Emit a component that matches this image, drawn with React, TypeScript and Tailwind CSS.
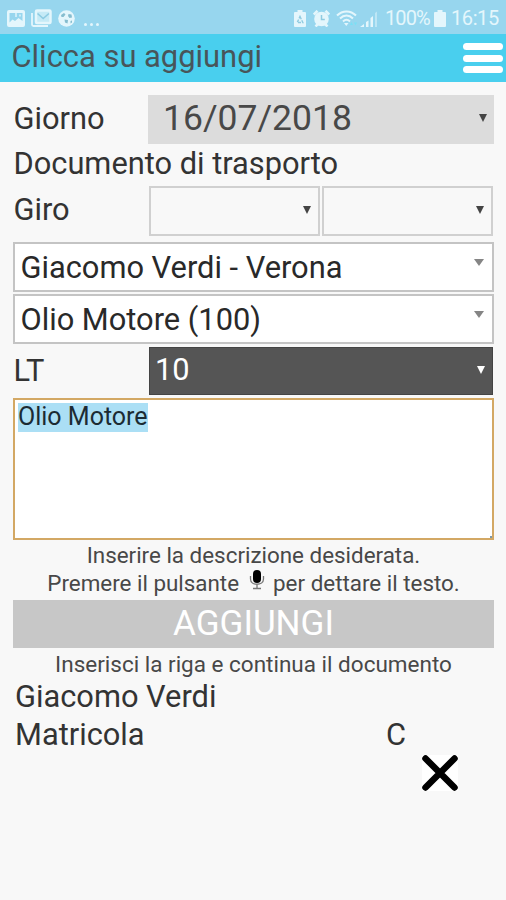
import React from "react";

function Caret({ className = "" }: { className?: string }) {
  return (
    <svg viewBox="0 0 8 8" className={`h-2 w-2 shrink-0 ${className}`} fill="currentColor">
      <path d="M0 0h8L4 8z" />
    </svg>
  );
}

function WideCaret() {
  return (
    <svg viewBox="0 0 10 7" className="mt-[15px] mr-[8px] h-[7px] w-[10px] shrink-0 text-[#858585]" fill="currentColor">
      <path d="M0 0h10L5 7z" />
    </svg>
  );
}

function StatusBar() {
  return (
    <div className="flex h-[34px] items-center justify-between bg-[#97d6ee] pl-[7px] pr-2 text-[#e4f6fc]">
      <div className="flex items-center pt-[2px]">
        <svg viewBox="0 0 18 17" className="h-[17px] w-[18px]" fill="currentColor">
          <path fillRule="evenodd" d="M2 0h14a2 2 0 0 1 2 2v13a2 2 0 0 1-2 2H2a2 2 0 0 1-2-2V2a2 2 0 0 1 2-2zM2.500 3v9.500l3-3 2.500 1.500 3.500-3 4 3V3z" />
          <path d="M8 2h2v5H8zM12 4.500h2v2h-2z" opacity=".7" />
        </svg>
        <svg viewBox="0 0 21 18" className="ml-[6px] h-[18px] w-[21px]" fill="none" stroke="currentColor">
          <path d="M1 4v11.500a1.500 1.500 0 0 0 1.500 1.500H17" strokeWidth="1.800" />
          <rect x="5" y="1.500" width="14.500" height="12.500" rx="1" strokeWidth="2.500" fill="currentColor" fillOpacity=".6" />
          <path d="M6.500 4.500l5.700 5 5.700-5" stroke="#8ccbe2" strokeWidth="1.600" />
        </svg>
        <svg viewBox="0 0 17 17" className="ml-[6px] h-[17px] w-[17px]">
          <circle cx="8.500" cy="8.500" r="8.300" fill="currentColor" />
          <path d="M3 5l3-2 1.500 1.500L5.500 7H3.500zM10.500 4l3 .5.500 3-2.500.5-1.500-2zM6.500 9.500l3.500.5-.5 3.500-2.500-1zM12.500 11l1.500-.5v2l-1.500 1z" fill="#86bdcf" />
        </svg>
        <div className="ml-[9px] flex gap-[3px] pt-3">
          <i className="size-[3px] rounded-full bg-current" />
          <i className="size-[3px] rounded-full bg-current" />
          <i className="size-[3px] rounded-full bg-current" />
        </div>
      </div>
      <div className="flex items-center pt-[2px]">
        <svg viewBox="0 0 12 17" className="h-[17px] w-3">
          <path d="M3.500 0h5v2H11a1 1 0 0 1 1 1v13a1 1 0 0 1-1 1H1a1 1 0 0 1-1-1V3a1 1 0 0 1 1-1h2.500z" fill="currentColor" />
          <path d="M6 6.500L8.800 12.500H3.200z" fill="none" stroke="#8fcbe0" strokeWidth="1.400" strokeDasharray="3 1.200" />
        </svg>
        <svg viewBox="0 0 17 17" className="ml-[7px] h-[17px] w-[17px]">
          <circle cx="8.500" cy="9" r="7.300" fill="currentColor" />
          <path d="M.8 4.500L4.500 .8M16.200 4.500L12.500 .8M2.500 16.500l2.500-2.500M14.500 16.500L12 14" stroke="currentColor" strokeWidth="2.600" />
          <path d="M8.500 5v4.500h3.300" fill="none" stroke="#8fcbe0" strokeWidth="1.500" />
        </svg>
        <svg viewBox="0 0 21 17" className="ml-[6px] h-[17px] w-[21px]" fill="none" stroke="currentColor">
          <path d="M1 5.500c5.500-5.500 13.500-5.500 19 0" strokeWidth="2" />
          <path d="M4 8.500c4-4 9-4 13 0M7 11.500c2.200-2.200 4.800-2.200 7 0" strokeWidth="2" />
          <path d="M8 13h4.500L10.300 16z" fill="currentColor" stroke="none" />
          <path d="M14 15l1.500-3 1.500 3zM18 12.500h3l-1.500 3z" fill="#79e0f5" stroke="none" />
        </svg>
        <svg viewBox="0 0 17 17" className="ml-[3px] h-[17px] w-[17px]" fill="currentColor">
          <path d="M0 17l4-3v3zM6 12l2.500-1.500V17H6zM10.500 8L13 6v11h-2.500z" />
          <path d="M15 3l2-1.500V17h-2z" opacity=".5" />
        </svg>
        <span className="ml-[8px] w-[44px] whitespace-nowrap text-[20px] leading-5 tracking-[-0.9px]">100%</span>
        <svg viewBox="0 0 12 17" className="ml-[5px] mr-[5px] h-[17px] w-3" fill="currentColor">
          <path d="M3.500 0h5v2H11a1 1 0 0 1 1 1v13a1 1 0 0 1-1 1H1a1 1 0 0 1-1-1V3a1 1 0 0 1 1-1h2.500z" />
        </svg>
        <span className="w-[47px] whitespace-nowrap text-[20px] leading-5 tracking-[-0.4px]">16:15</span>
      </div>
    </div>
  );
}

function SelectBox({ label }: { label: string }) {
  return (
    <div className="flex h-[50px] justify-between border-2 border-[#c4c4c4] bg-white pl-[5.5px]">
      <span className="whitespace-nowrap text-[30.8px] leading-[47px] text-[#292929]">{label}</span>
      <WideCaret />
    </div>
  );
}

export default function App() {
  return (
    <div className="flex h-[900px] w-[506px] flex-col overflow-hidden bg-[#f8f8f8] font-['Roboto',sans-serif] text-[#333]">
      <StatusBar />
      <header className="flex h-[48px] justify-between bg-[#49cfee] pl-[11.5px] pr-[3px]">
        <h1 className="text-[30.9px] leading-[45px] text-[#48555a]">Clicca su aggiungi</h1>
        <button className="mt-[9px] flex h-[30px] w-10 flex-col justify-between">
          <span className="h-[7px] w-full rounded-full bg-white" />
          <span className="h-[7px] w-full rounded-full bg-white" />
          <span className="h-[7px] w-full rounded-full bg-white" />
        </button>
      </header>
      <main className="flex flex-col px-3 pt-[13px] pl-[13px] text-[30.8px] whitespace-nowrap">
        <div className="flex h-[49px]">
          <span className="w-[135px] pl-[0.5px] leading-[47px]">Giorno</span>
          <div className="flex flex-1 items-start justify-between bg-[#dcdcdc] pl-[15px] pr-[7px] text-[#484848]">
            <span className="text-[35.5px] leading-[46px]">16/07/2018</span>
            <Caret className="mt-[19px] text-[#444]" />
          </div>
        </div>
        <p className="h-[42px] pl-[0.5px] leading-[39px]">Documento di trasporto</p>
        <div className="flex h-[50px]">
          <span className="w-[136px] pl-[0.5px] leading-[47px]">Giro</span>
          <div className="flex w-[171px] items-center justify-end border-2 border-[#d0d0d0] pr-[7px]">
            <Caret className="mb-[2px] text-[#444]" />
          </div>
          <div className="ml-[2px] flex w-[171px] items-center justify-end border-2 border-[#d0d0d0] pr-[7px]">
            <Caret className="mb-[2px] text-[#444]" />
          </div>
        </div>
        <div className="mt-[6px] flex flex-col gap-[2px]">
          <SelectBox label="Giacomo Verdi - Verona" />
          <SelectBox label="Olio Motore (100)" />
        </div>
        <div className="mt-[3px] flex h-[48px]">
          <span className="w-[136px] pl-[0.5px] leading-[47px]">LT</span>
          <div className="mr-px flex flex-1 items-start justify-between border border-[#444] bg-[#555] pl-[5px] pr-[7px] text-white">
            <span className="leading-[43px]">10</span>
            <Caret className="mt-[18px]" />
          </div>
        </div>
        <div className="mt-[3px] flex h-[142px] items-start justify-between border-2 border-[#d3a864] bg-white pt-[3px] pl-[3px] text-[25px]">
          <span className="h-[29px] bg-[#abdff5] leading-[28px] text-[#1c2b33]">Olio Motore</span>
          <i className="size-[2px] self-end bg-[#7d99a8]" />
        </div>
        <p className="h-[29px] text-center text-[22.4px] leading-[31px] text-[#484848]">Inserire la descrizione desiderata.</p>
        <p className="flex h-[31px] justify-center text-[22.4px] leading-[29px] text-[#484848]">
          Premere il pulsante
          <svg viewBox="0 0 16 22" className="mr-[8px] ml-[10px] h-[22px] w-4">
            <rect x="4" y="1" width="8" height="13" rx="4" fill="#000" />
            <path d="M1.500 7v3c0 7 13 7 13 0V7M8 15.500V19M4 19.500h8" fill="none" stroke="#777" strokeWidth="1.300" />
          </svg>
          per dettare il testo.
        </p>
        <button className="h-[48px] bg-[#c7c7c7] text-[35px] leading-[46px] text-white">AGGIUNGI</button>
        <p className="h-[29px] text-center text-[22.5px] leading-[33px] text-[#484848]">Inserisci la riga e continua il documento</p>
        <p className="h-[38px] pl-[2px] leading-[39px]">Giacomo Verdi</p>
        <div className="flex h-[38px] pl-[2px] leading-[39px]">
          <span className="w-[371px]">Matricola</span>
          <span>C</span>
        </div>
        <svg viewBox="0 0 36 36" className="mt-[2px] ml-[409px] size-9 bg-white">
          <path d="M3.500 3.500l29 29M32.500 3.500l-29 29" stroke="#000" strokeWidth="6.500" strokeLinecap="round" />
        </svg>
      </main>
    </div>
  );
}
